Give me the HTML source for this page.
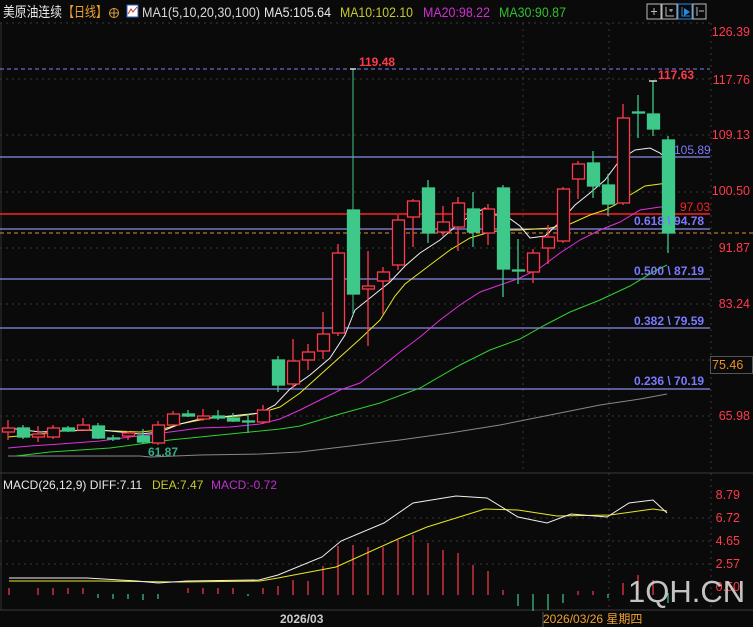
<!DOCTYPE html>
<html><head><meta charset="utf-8"><style>
html,body{margin:0;padding:0;background:#0a0a0a;width:753px;height:627px;overflow:hidden}
svg{display:block}
text{font-family:"Liberation Sans","Noto Sans CJK SC",sans-serif}
</style></head><body>
<svg width="753" height="627" viewBox="0 0 753 627" xmlns="http://www.w3.org/2000/svg">
<rect width="753" height="627" fill="#0a0a0a"/>
<!-- header -->
<text x="3" y="17" font-size="14" fill="#e8e8e8" textLength="59" lengthAdjust="spacingAndGlyphs">美原油连续</text>
<text x="63" y="17" font-size="14" fill="#f0a030" textLength="44" lengthAdjust="spacingAndGlyphs">【日线】</text>
<circle cx="114" cy="13" r="4.5" fill="none" stroke="#e0a040" stroke-width="1"/><line x1="109.5" y1="13" x2="118.5" y2="13" stroke="#e0a040"/><line x1="114" y1="8.5" x2="114" y2="17.5" stroke="#e0a040"/>
<rect x="127" y="5" width="11" height="12" fill="#fff" stroke="#3060c0"/><polyline points="128,14 131,9 133,12 137,7" fill="none" stroke="#d03030"/>
<text x="142" y="17" font-size="14" fill="#d8d8d8" textLength="118" lengthAdjust="spacingAndGlyphs">MA1(5,10,20,30,100)</text>
<text x="264" y="17" font-size="14" fill="#e8e8e8" textLength="67" lengthAdjust="spacingAndGlyphs">MA5:105.64</text>
<text x="340" y="17" font-size="14" fill="#c8c830" textLength="73" lengthAdjust="spacingAndGlyphs">MA10:102.10</text>
<text x="423" y="17" font-size="14" fill="#d030d0" textLength="67" lengthAdjust="spacingAndGlyphs">MA20:98.22</text>
<text x="499" y="17" font-size="14" fill="#30c030" textLength="67" lengthAdjust="spacingAndGlyphs">MA30:90.87</text>
<g fill="none" stroke="#bbb">
<rect x="647" y="4" width="14" height="15"/><rect x="662" y="4" width="15" height="15"/><rect x="678" y="4" width="14" height="15" stroke="#2a8adf"/><rect x="693" y="4" width="13" height="15"/>
<path d="M651 11.5h6M654 8v7"/><path d="M666 7v9h8M669 10h4M671 9v3"/><path d="M682 7v9h8" stroke="#2a8adf"/><path d="M697 7v9M699 11h5"/>
</g>
<polygon points="684,8 690,12 684,16" fill="#2a8adf"/>
<!-- grid -->
<g stroke="#3a3a3a" stroke-dasharray="2,4">
<line x1="0" y1="23" x2="710" y2="23"/><line x1="0" y1="79" x2="710" y2="79"/><line x1="0" y1="135" x2="710" y2="135"/><line x1="0" y1="192" x2="710" y2="192"/><line x1="0" y1="248" x2="710" y2="248"/><line x1="0" y1="304" x2="710" y2="304"/><line x1="0" y1="360" x2="710" y2="360"/><line x1="0" y1="416" x2="710" y2="416"/>
<line x1="609" y1="23" x2="609" y2="610"/><line x1="523" y1="23" x2="523" y2="470"/><line x1="711" y1="23" x2="711" y2="610"/>
<line x1="0" y1="518" x2="710" y2="518"/><line x1="0" y1="541" x2="710" y2="541"/><line x1="0" y1="564" x2="710" y2="564"/>
</g>
<line x1="1" y1="23" x2="1" y2="610" stroke="#333"/>
<line x1="0" y1="473" x2="753" y2="473" stroke="#3a3a3a"/>
<line x1="0" y1="610" x2="753" y2="610" stroke="#3a3a3a"/>
<!-- levels -->
<line x1="0" y1="69" x2="710" y2="69" stroke="#8080ff" stroke-dasharray="4,3"/>
<g stroke="#8a8ae8" stroke-width="1.2">
<line x1="0" y1="157" x2="710" y2="157"/><line x1="0" y1="229" x2="710" y2="229"/><line x1="0" y1="279" x2="710" y2="279"/><line x1="0" y1="328" x2="710" y2="328"/><line x1="0" y1="389" x2="710" y2="389"/>
</g>
<line x1="0" y1="214" x2="710" y2="214" stroke="#ff2020" stroke-width="1.5"/>
<line x1="0" y1="233" x2="753" y2="233" stroke="#e09030" stroke-dasharray="4,3"/>
<!-- MAs -->
<g fill="none" stroke-width="1">
<polyline stroke="#888" points="8,456 140,456 150,457 200,455 260,454 300,452 350,446 400,440 450,433 500,425 550,415 600,405 640,399 667,394"/>
<polyline stroke="#30d030" points="16,456 50,452 80,450 110,448 140,444 170,440 200,437 240,433 280,429 300,426 320,420 340,414 380,403 420,388 460,365 490,350 520,339 545,325 570,312 600,300 630,286 655,271 667,265"/>
<polyline stroke="#e030e0" points="8,448 30,446 60,444 100,441 130,437 170,432 200,428 230,427 260,424 280,419 300,410 320,400 340,390 360,383 380,368 400,352 420,337 440,320 460,305 480,292 500,285 520,278 540,268 560,253 580,240 600,230 620,222 640,210 660,207 667,207"/>
<polyline stroke="#e8e820" points="8,437 40,434 60,431 90,430 140,432 160,430 180,424 210,418 240,416 260,413 280,407 300,393 320,375 340,357 360,339 380,320 395,296 405,284 430,265 450,250 470,238 490,232 505,230 520,230 550,228 570,224 590,215 605,210 615,205 630,195 645,186 660,184 667,183"/>
<polyline stroke="#f0f0f0" points="8,428 40,432 60,431 100,430 140,434 160,432 180,424 200,419 230,416 260,413 275,405 290,389 310,375 330,358 345,335 355,310 370,298 390,282 405,266 420,253 440,240 455,227 470,216 485,208 495,215 505,215 520,226 530,238 545,236 560,222 575,205 590,193 605,180 620,160 635,150 650,148 660,153 667,159"/>
</g>
<!-- candles -->
<g stroke-width="1.3">
<g stroke="#ff3a4a" fill="#0a0a0a">
<line x1="8" y1="420" x2="8" y2="440"/><rect x="2.5" y="428" width="12" height="4"/>
<line x1="38" y1="426" x2="38" y2="442"/><rect x="32.5" y="434" width="12" height="3"/>
<line x1="53" y1="425" x2="53" y2="439"/><rect x="47.5" y="428" width="12" height="9"/>
<line x1="83" y1="418" x2="83" y2="430"/><rect x="77.5" y="425" width="12" height="5"/>
<line x1="128" y1="431" x2="128" y2="440"/><rect x="122.5" y="433" width="12" height="3"/>
<line x1="158" y1="421" x2="158" y2="445"/><rect x="152.5" y="425" width="12" height="18"/>
<line x1="173" y1="411" x2="173" y2="425"/><rect x="167.5" y="414" width="12" height="11"/>
<line x1="203" y1="409" x2="203" y2="421"/><rect x="197.5" y="416" width="12" height="3"/>
<line x1="263" y1="405" x2="263" y2="424"/><rect x="257.5" y="410" width="12" height="12"/>
<line x1="293" y1="339" x2="293" y2="388"/><rect x="287.5" y="361" width="12" height="23"/>
<line x1="308" y1="344" x2="308" y2="370"/><rect x="302.5" y="352" width="12" height="8"/>
<line x1="323" y1="312" x2="323" y2="359"/><rect x="317.5" y="334" width="12" height="17"/>
<line x1="338" y1="244" x2="338" y2="336"/><rect x="332.5" y="253" width="12" height="80"/>
<line x1="368" y1="251" x2="368" y2="346"/><rect x="362.5" y="286" width="12" height="3"/>
<line x1="383" y1="267" x2="383" y2="314"/><rect x="377.5" y="272" width="12" height="9"/>
<line x1="398" y1="215" x2="398" y2="270"/><rect x="392.5" y="220" width="12" height="45"/>
<line x1="413" y1="199" x2="413" y2="247"/><rect x="407.5" y="201" width="12" height="16"/>
<line x1="443" y1="206" x2="443" y2="236"/><rect x="437.5" y="222" width="12" height="10"/>
<line x1="458" y1="197" x2="458" y2="251"/><rect x="452.5" y="203" width="12" height="24"/>
<line x1="488" y1="204" x2="488" y2="245"/><rect x="482.5" y="209" width="12" height="24"/>
<line x1="533" y1="249" x2="533" y2="283"/><rect x="527.5" y="253" width="12" height="19"/>
<line x1="548" y1="225" x2="548" y2="264"/><rect x="542.5" y="237" width="12" height="11"/>
<line x1="563" y1="187" x2="563" y2="243"/><rect x="557.5" y="189" width="12" height="52"/>
<line x1="578" y1="161" x2="578" y2="199"/><rect x="572.5" y="164" width="12" height="15"/>
<line x1="623" y1="104" x2="623" y2="205"/><rect x="617.5" y="118" width="12" height="85"/>
</g>
<g stroke="#3ec88a" fill="#3ec88a">
<line x1="23" y1="425" x2="23" y2="439"/><rect x="17.5" y="428" width="12" height="9"/>
<line x1="68" y1="426" x2="68" y2="432"/><rect x="62.5" y="428" width="12" height="3"/>
<line x1="98" y1="423" x2="98" y2="439"/><rect x="92.5" y="426" width="12" height="12"/>
<line x1="113" y1="435" x2="113" y2="441"/><rect x="107.5" y="438" width="12" height="1"/>
<line x1="143" y1="429" x2="143" y2="444"/><rect x="137.5" y="436" width="12" height="6"/>
<line x1="188" y1="410" x2="188" y2="417"/><rect x="182.5" y="414" width="12" height="2"/>
<line x1="218" y1="410" x2="218" y2="420"/><rect x="212.5" y="416" width="12" height="2"/>
<line x1="233" y1="413" x2="233" y2="422"/><rect x="227.5" y="418" width="12" height="3"/>
<line x1="248" y1="414" x2="248" y2="433"/><rect x="242.5" y="421" width="12" height="1"/>
<line x1="278" y1="356" x2="278" y2="392"/><rect x="272.5" y="360" width="12" height="25"/>
<line x1="353" y1="69" x2="353" y2="315" stroke-width="1"/><rect x="347.5" y="210" width="12" height="84"/>
<line x1="428" y1="180" x2="428" y2="243"/><rect x="422.5" y="188" width="12" height="45"/>
<line x1="473" y1="192" x2="473" y2="247"/><rect x="467.5" y="209" width="12" height="23"/>
<line x1="503" y1="185" x2="503" y2="297"/><rect x="497.5" y="188" width="12" height="81"/>
<line x1="518" y1="239" x2="518" y2="284"/><rect x="512.5" y="270" width="12" height="1"/>
<line x1="593" y1="151" x2="593" y2="198"/><rect x="587.5" y="163" width="12" height="23"/>
<line x1="608" y1="174" x2="608" y2="216"/><rect x="602.5" y="185" width="12" height="19"/>
<line x1="638" y1="95" x2="638" y2="138"/><rect x="632.5" y="112" width="12" height="1"/>
<line x1="653" y1="81" x2="653" y2="136"/><rect x="647.5" y="114" width="12" height="15"/>
<line x1="668" y1="136" x2="668" y2="253"/><rect x="662.5" y="140" width="12" height="93"/>
</g>
<path d="M649 81h8M350 69h6" stroke="#fff"/>
</g>
<!-- labels -->
<g font-size="12" font-weight="bold">
<text x="359" y="66" fill="#ff3a4a">119.48</text>
<text x="658" y="79" fill="#ff3a4a">117.63</text>
<text x="674" y="154" fill="#7a7aff" font-weight="normal">105.89</text>
<text x="680" y="211" fill="#ff2020" font-weight="normal">97.03</text>
<text x="634" y="225" fill="#7a7aff">0.618 \ 94.78</text>
<text x="634" y="275" fill="#7a7aff">0.500 \ 87.19</text>
<text x="634" y="325" fill="#7a7aff">0.382 \ 79.59</text>
<text x="634" y="385" fill="#7a7aff">0.236 \ 70.19</text>
<text x="148" y="456" fill="#3aa888">61.87</text>
</g>
<g font-size="12.5" fill="#ff3a4a" text-anchor="end">
<text x="750" y="36">126.39</text><text x="750" y="84">117.76</text><text x="750" y="139">109.13</text><text x="750" y="195">100.50</text><text x="750" y="252">91.87</text><text x="750" y="308">83.24</text><text x="750" y="420">65.98</text>
<text x="740" y="499">8.79</text><text x="740" y="522">6.72</text><text x="740" y="545">4.65</text><text x="740" y="568">2.57</text><text x="740" y="591">0.50</text>
</g>
<rect x="710.5" y="356.5" width="42" height="17" fill="#0a0a0a" stroke="#555"/>
<text x="712" y="369" font-size="12.5" fill="#e8902a">75.46</text>
<!-- MACD -->
<text x="3" y="489" font-size="12" fill="#e8e8e8">MACD(26,12,9) DIFF:7.11</text>
<text x="152" y="489" font-size="12" fill="#c8c830">DEA:7.47</text>
<text x="211" y="489" font-size="12" fill="#c030d0">MACD:-0.72</text>
<g stroke="#ff3a4a" stroke-width="1.2">
<line x1="9" y1="588" x2="9" y2="595"/><line x1="38" y1="588" x2="38" y2="595"/><line x1="53" y1="588" x2="53" y2="595"/><line x1="68" y1="588" x2="68" y2="594"/><line x1="83" y1="588" x2="83" y2="594"/>
<line x1="188" y1="588" x2="188" y2="593"/><line x1="203" y1="588" x2="203" y2="594"/><line x1="218" y1="588" x2="218" y2="594"/><line x1="233" y1="588" x2="233" y2="594"/><line x1="263" y1="588" x2="263" y2="594"/>
<line x1="278" y1="586" x2="278" y2="595"/><line x1="293" y1="580" x2="293" y2="595"/><line x1="308" y1="581" x2="308" y2="595"/><line x1="323" y1="566" x2="323" y2="595"/><line x1="338" y1="546" x2="338" y2="595"/><line x1="353" y1="545" x2="353" y2="595"/><line x1="368" y1="547" x2="368" y2="595"/><line x1="383" y1="547" x2="383" y2="595"/><line x1="398" y1="540" x2="398" y2="595"/><line x1="413" y1="535" x2="413" y2="595"/><line x1="428" y1="543" x2="428" y2="595"/><line x1="443" y1="550" x2="443" y2="595"/><line x1="458" y1="553" x2="458" y2="595"/><line x1="473" y1="565" x2="473" y2="595"/><line x1="488" y1="571" x2="488" y2="595"/><line x1="503" y1="590" x2="503" y2="595"/>
<line x1="578" y1="591" x2="578" y2="595"/><line x1="593" y1="591" x2="593" y2="595"/><line x1="623" y1="583" x2="623" y2="595"/><line x1="638" y1="575" x2="638" y2="595"/><line x1="653" y1="580" x2="653" y2="595"/>
</g>
<g stroke="#3ec88a" stroke-width="1.2">
<line x1="98" y1="594" x2="98" y2="598"/><line x1="113" y1="594" x2="113" y2="599"/><line x1="128" y1="594" x2="128" y2="599"/><line x1="143" y1="594" x2="143" y2="600"/><line x1="158" y1="594" x2="158" y2="599"/><line x1="248" y1="594" x2="248" y2="596"/>
<line x1="518" y1="594" x2="518" y2="606"/><line x1="533" y1="594" x2="533" y2="611"/><line x1="548" y1="594" x2="548" y2="610"/><line x1="563" y1="594" x2="563" y2="603"/><line x1="608" y1="594" x2="608" y2="598"/><line x1="668" y1="593" x2="668" y2="603"/>
</g>
<polyline fill="none" stroke="#e8e820" points="9,581 100,581 180,582 260,581 278,578 336,567 398,539 427,527 485,509 518,510 557,516 610,515 653,509 667,511"/>
<polyline fill="none" stroke="#f0f0f0" points="9,578 87,578 137,581 158,583 187,581 259,580 278,575 322,557 341,541 384,523 413,503 456,496 487,498 518,517 547,523 571,514 607,517 629,503 653,500 667,513"/>
<!-- x axis -->
<text x="280" y="623" font-size="12" fill="#ccc" font-weight="bold">2026/03</text>
<text x="543" y="623" font-size="12" fill="#f0a030">2026/03/26 星期四</text>
<line x1="543" y1="612" x2="543" y2="627" stroke="#555"/>
<text x="628" y="602" font-size="31" fill="#d8d8d8" opacity="0.9">1QH.CN</text>
</svg>
</body></html>
